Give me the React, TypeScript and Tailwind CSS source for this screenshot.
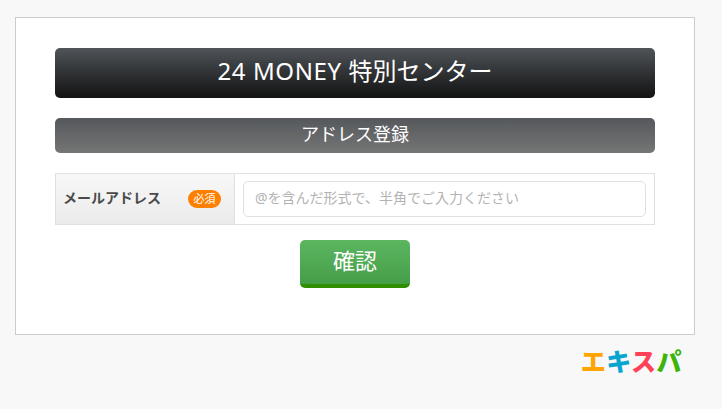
export default function App() {
  return (
    <div className="min-h-[409px] bg-[#f8f8f8] px-[15px] pt-[17px] font-['Noto_Sans','Noto_Sans_CJK_JP',sans-serif]">
      {/* Main card */}
      <div className="h-[318px] w-[680px] border border-[#cccccc] bg-white px-[39px] pt-[30px]">
        <h1 className="flex h-[50px] items-center justify-center rounded-[5px] bg-gradient-to-b from-[#50555a] to-[#131313] pb-1 text-[24px] font-normal whitespace-pre text-white">
          <span className="tracking-[0.6px]">24 MONEY </span>特別センター
        </h1>
        <h2 className="mt-5 flex h-[35px] items-center justify-center rounded-[5px] bg-gradient-to-b from-[#55585c] to-[#757675] pb-0.5 text-[18px] font-normal text-white">
          アドレス登録
        </h2>

        {/* Form row */}
        <div className="mt-5 flex h-[52px] border border-[#e0e0e0]">
          <div className="flex w-[179px] items-center justify-between border-r border-[#e0e0e0] bg-gradient-to-b from-[#f8f8f8] to-[#ebebeb] pr-[13px] pl-[7px]">
            <span className="pb-[3px] text-[14px] font-bold text-[#4a4a4a]">メールアドレス</span>
            <span className="flex h-[18px] w-[33px] items-center justify-center rounded-full bg-[#ff8000] text-[11px] text-white">
              必須
            </span>
          </div>
          <div className="flex flex-1 items-center px-2">
            <input
              type="text"
              placeholder="@を含んだ形式で、半角でご入力ください"
              className="h-[36px] w-full rounded-[5px] border border-[#e0e0e0] bg-white px-[11px] pb-[3px] text-[14px] outline-none placeholder:text-[#b3b3b3]"
            />
          </div>
        </div>

        {/* Submit */}
        <div className="mt-[15px] flex justify-center">
          <button className="h-[48px] w-[110px] rounded-[5px] border-b-4 border-[#2f8f00] bg-gradient-to-b from-[#5cb660] to-[#459d48] pb-1 text-[22px] leading-none text-white">
            確認
          </button>
        </div>
      </div>

      {/* Logo */}
      <div className="mt-[9px] flex w-[680px] justify-end pr-[13px]">
        <span className="text-[25px] leading-[32px] font-black tracking-[0.5px] font-['Noto_Sans_CJK_JP',sans-serif]">
          <span className="text-[#ffa400]">エ</span>
          <span className="text-[#0aa5cf]">キ</span>
          <span className="text-[#ff4157]">ス</span>
          <span className="text-[#3cb40a]">パ</span>
        </span>
      </div>
    </div>
  );
}
